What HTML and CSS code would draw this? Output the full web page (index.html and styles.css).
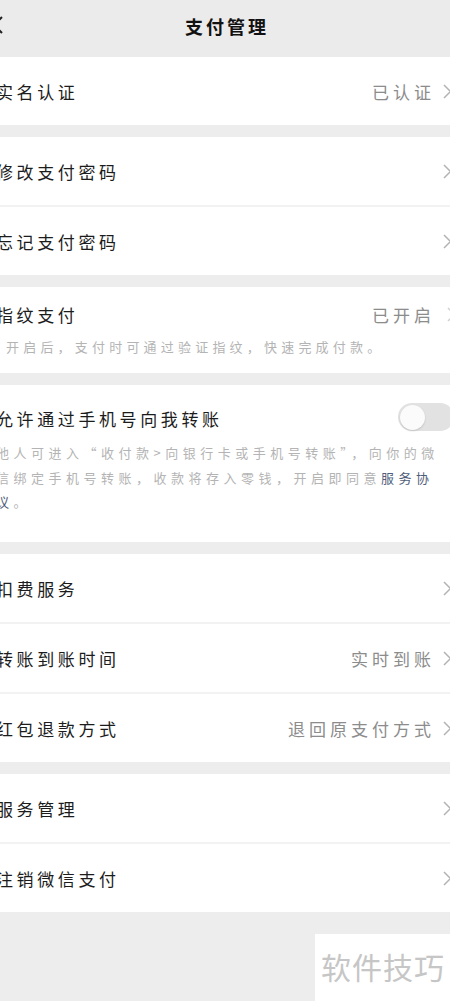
FILE: index.html
```html
<!DOCTYPE html>
<html lang="zh-CN">
<head>
<meta charset="utf-8">
<title>支付管理</title>
<link rel="stylesheet" href="styles.css">
</head>
<body>
<div class="page">
  <header class="nav">
    <svg class="back" width="14" height="18" viewBox="0 0 14 18"><path d="M10 1 L2 9 L10 17" fill="none" stroke="#222" stroke-width="2"/></svg>
    <h1 class="title">支付管理</h1>
  </header>

  <section class="group">
    <div class="row">
      <span class="label">实名认证</span>
      <span class="value">已认证</span>
      <svg class="chev" width="9" height="15" viewBox="0 0 9 15"><path d="M1 1 L7.5 7.5 L1 14" fill="none" stroke="#b3b3b3" stroke-width="1.5"/></svg>
    </div>
  </section>

  <section class="group">
    <div class="row">
      <span class="label">修改支付密码</span>
      <svg class="chev" width="9" height="15" viewBox="0 0 9 15"><path d="M1 1 L7.5 7.5 L1 14" fill="none" stroke="#b3b3b3" stroke-width="1.5"/></svg>
    </div>
    <div class="row">
      <span class="label">忘记支付密码</span>
      <svg class="chev" width="9" height="15" viewBox="0 0 9 15"><path d="M1 1 L7.5 7.5 L1 14" fill="none" stroke="#b3b3b3" stroke-width="1.5"/></svg>
    </div>
  </section>

  <section class="group">
    <div class="block fp">
      <div class="block-head">
        <span class="label">指纹支付</span>
        <span class="value">已开启</span>
        <svg class="chev" width="9" height="15" viewBox="0 0 9 15"><path d="M1 1 L7.5 7.5 L1 14" fill="none" stroke="#d0d0d0" stroke-width="1.5"/></svg>
      </div>
      <p class="desc indent">开启后，支付时可通过验证指纹，快速完成付款。</p>
    </div>
  </section>

  <section class="group">
    <div class="block phone">
      <div class="block-head">
        <span class="label">允许通过手机号向我转账</span>
        <span class="toggle"><span class="knob"></span></span>
      </div>
      <p class="desc">他人可进入“收付款&gt;向银行卡或手机号转账”，向你的微<br>信绑定手机号转账，收款将存入零钱，开启即同意<span class="link">服务协</span><br><span class="link">议</span>。</p>
    </div>
  </section>

  <section class="group">
    <div class="row">
      <span class="label">扣费服务</span>
      <svg class="chev" width="9" height="15" viewBox="0 0 9 15"><path d="M1 1 L7.5 7.5 L1 14" fill="none" stroke="#b3b3b3" stroke-width="1.5"/></svg>
    </div>
    <div class="row">
      <span class="label">转账到账时间</span>
      <span class="value">实时到账</span>
      <svg class="chev" width="9" height="15" viewBox="0 0 9 15"><path d="M1 1 L7.5 7.5 L1 14" fill="none" stroke="#b3b3b3" stroke-width="1.5"/></svg>
    </div>
    <div class="row">
      <span class="label">红包退款方式</span>
      <span class="value">退回原支付方式</span>
      <svg class="chev" width="9" height="15" viewBox="0 0 9 15"><path d="M1 1 L7.5 7.5 L1 14" fill="none" stroke="#b3b3b3" stroke-width="1.5"/></svg>
    </div>
  </section>

  <section class="group">
    <div class="row">
      <span class="label">服务管理</span>
      <svg class="chev" width="9" height="15" viewBox="0 0 9 15"><path d="M1 1 L7.5 7.5 L1 14" fill="none" stroke="#b3b3b3" stroke-width="1.5"/></svg>
    </div>
    <div class="row">
      <span class="label">注销微信支付</span>
      <svg class="chev" width="9" height="15" viewBox="0 0 9 15"><path d="M1 1 L7.5 7.5 L1 14" fill="none" stroke="#b3b3b3" stroke-width="1.5"/></svg>
    </div>
  </section>

  <footer class="foot">
    <div class="watermark">软件技巧</div>
  </footer>
</div>
</body>
</html>
```
FILE: styles.css
```css
html, body {
  margin: 0;
  padding: 0;
  overflow: hidden;
  background: #ededed;
}
body {
  width: 450px;
  height: 1001px;
  font-family: "Noto Sans CJK SC", "Noto Sans", sans-serif;
  color: #1a1a1a;
}
.page {
  width: 450px;
  overflow: hidden;
}
.nav {
  height: 57px;
  background: #ebebeb;
  display: flex;
  align-items: center;
  justify-content: center;
  position: relative;
}
.back {
  position: absolute;
  left: -8px;
  top: 16px;
}
.title {
  margin: 0 0 6px 0;
  font-size: 18px;
  font-weight: 700;
  letter-spacing: 3px;
  padding-left: 4px;
  color: #111;
}
.group {
  background: #fff;
  margin-bottom: 12px;
}
.row {
  height: 68px;
  display: flex;
  align-items: center;
  border-bottom: 2px solid #f2f2f2;
  margin-left: -4px;
}
.row:last-child {
  border-bottom: none;
}
.label {
  font-size: 17px;
  letter-spacing: 3.6px;
  color: #1c1c1c;
  flex: 1;
}
.value {
  font-size: 17px;
  letter-spacing: 4px;
  color: #8c8c8c;
  margin-right: 8px;
}
.chev {
  margin-right: -2px;
  flex: none;
}
.block {
  margin-left: -4px;
}
.block-head {
  display: flex;
  align-items: center;
}
.fp {
  height: 86px;
}
.fp .block-head {
  height: 54px;
}
.fp .value {
  margin-right: 12px;
}
.fp .chev {
  margin-right: -6px;
}
.desc {
  margin: 0;
  font-size: 13px;
  letter-spacing: 4.5px;
  line-height: 24.5px;
  color: #b4b4b4;
  white-space: nowrap;
}
.indent {
  padding-left: 10px;
  margin-top: -6px;
  letter-spacing: 4.2px;
}
.phone {
  height: 157px;
}
.phone .block-head {
  height: 66px;
}
.phone .desc {
  margin-top: -10px;
}
.link {
  color: #4f5d7a;
}
.toggle {
  width: 56px;
  height: 28px;
  border-radius: 14px;
  background: #e2e2e2;
  margin-right: -4px;
  margin-top: -2px;
  display: flex;
  align-items: center;
  padding-left: 2px;
  box-sizing: border-box;
}
.knob {
  width: 25px;
  height: 25px;
  border-radius: 50%;
  background: #fbfbfb;
  box-shadow: 0 1px 2px rgba(0,0,0,0.15);
}
.foot {
  display: flex;
  justify-content: flex-end;
  padding-top: 10px;
}
.watermark {
  width: 135px;
  height: 80px;
  background: #fff;
  font-size: 30px;
  color: #c6c6c6;
  letter-spacing: 1px;
  padding: 10px 0 0 6px;
  box-sizing: border-box;
}
```
